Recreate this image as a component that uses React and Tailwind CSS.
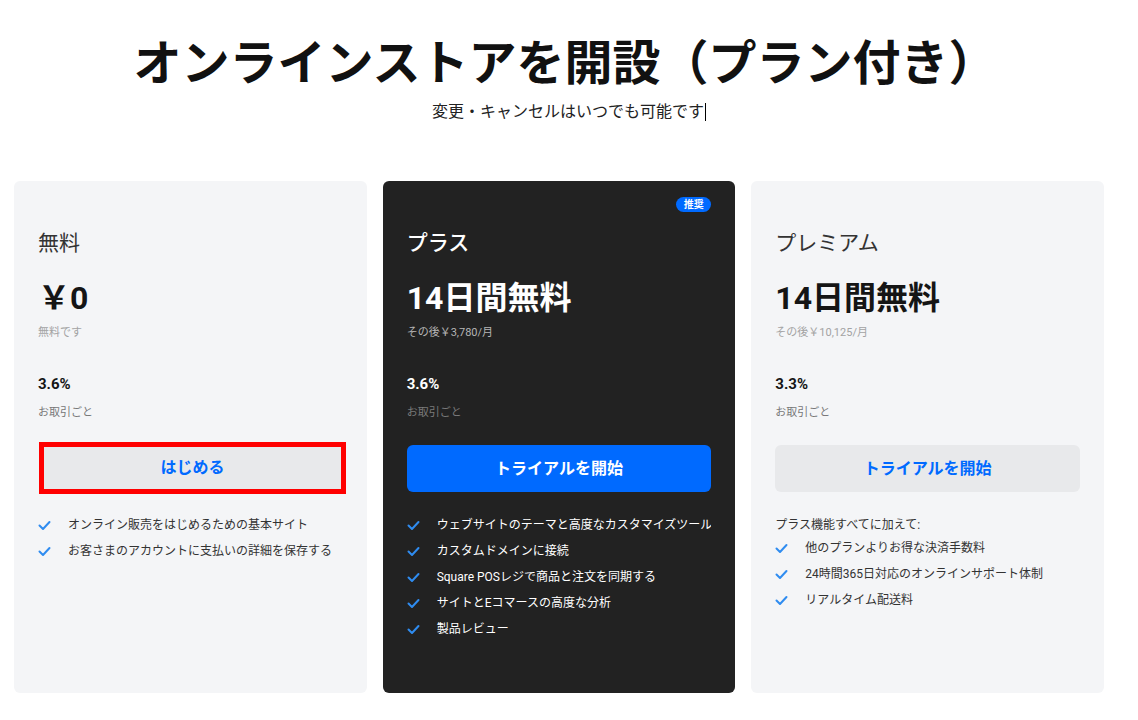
import React from "react";

const FONT = { fontFamily: 'Roboto, "Noto Sans CJK JP", "Noto Sans", sans-serif' };

function Check() {
  return (
    <svg width="13" height="11" viewBox="0 0 13 11" className="shrink-0 block">
      <polyline points="1.5,5.5 5,9 11.5,2" fill="none" stroke="#2f8cf0" strokeWidth="2" strokeLinecap="round" strokeLinejoin="round" />
    </svg>
  );
}

function Feature({ text, dark }) {
  return (
    <li className={`flex items-center h-[26px] overflow-hidden text-[12px] leading-[16px] whitespace-nowrap ${dark ? "text-white" : "text-[#333]"}`}>
      <Check />
      <span className="ml-[17px]">{text}</span>
    </li>
  );
}

function Card({ dark, name, price, sub, rate, cta, ctaPrimary, highlight, header, features, badge }) {
  return (
    <div className={`relative rounded-[6px] h-[512px] px-6 pt-12 flex flex-col ${dark ? "bg-[#222222]" : "bg-[#f4f5f7]"}`}>
      {badge && (
        <span className="absolute top-4 right-6 h-[15px] w-[35px] rounded-full bg-[#006aff] text-white text-[10px] font-bold leading-[15px] text-center">
          {badge}
        </span>
      )}
      <div className="h-[263px] shrink-0 flex flex-col">
        <div className={`mt-px h-[28px] flex items-center text-[21px] ${dark ? "text-white font-medium" : "text-[#333]"}`}>{name}</div>
        <div className={`mt-5 h-[40px] flex items-center text-[32px] font-bold ${dark ? "text-white" : "text-[#151515]"}`}>{price}</div>
        <div className={`mt-[7px] h-[16px] flex items-center text-[11px] ${dark ? "text-[#b5b5b5]" : "text-[#a3a3a3]"}`}>{sub}</div>
        <div className={`mt-[33px] h-[20px] flex items-center text-[15px] font-bold ${dark ? "text-white" : "text-[#151515]"}`}>{rate}</div>
        <div className={`mt-[11px] h-[16px] flex items-center text-[11px] ${dark ? "text-[#7a7a7a]" : "text-[#777]"}`}>お取引ごと</div>
        <div className="mt-auto h-[47px]">
          {highlight ? (
            <div className="ml-px -mt-[3px] w-[307px] h-[52px] border-[5px] border-[#ff0000] bg-[#e8e9eb] flex items-center justify-center text-[16px] font-bold text-[#006aff]">
              {cta}
            </div>
          ) : (
            <div
              className={`h-[47px] rounded-[6px] flex items-center justify-center text-[16px] font-bold ${
                ctaPrimary ? "bg-[#006aff] text-white" : "bg-[#e8e9eb] text-[#006aff]"
              }`}
            >
              {cta}
            </div>
          )}
        </div>
      </div>
      <div className="mt-5 flex flex-col">
        {header && <div className="h-[20px] flex items-center text-[12px] text-[#333] mt-[3px]">{header}</div>}
        <ul className="flex flex-col">
          {features.map((f) => (
            <Feature key={f} text={f} dark={dark} />
          ))}
        </ul>
      </div>
    </div>
  );
}

export default function App() {
  return (
    <div className="w-[1138px] h-[720px] bg-white overflow-hidden" style={FONT}>
      <div className="w-[1118px]">
        <h1 className="pt-[36px] pl-[12px] text-center text-[48px] leading-[56px] font-bold text-[#111]">
          オンラインストアを開設（プラン付き）
        </h1>
        <p className="mt-[8px] pl-[20px] text-center text-[16px] leading-[24px] text-[#222]">
          変更・キャンセルはいつでも可能です
          <span className="inline-block align-middle w-px h-[18px] bg-black ml-px -mt-[2px]" />
        </p>
        <div className="mt-[57px] px-[14px] grid grid-cols-3 gap-4">
          <Card
            name="無料"
            price="￥0"
            sub="無料です"
            rate="3.6%"
            cta="はじめる"
            highlight
            features={["オンライン販売をはじめるための基本サイト", "お客さまのアカウントに支払いの詳細を保存する"]}
          />
          <Card
            dark
            badge="推奨"
            name="プラス"
            price="14日間無料"
            sub="その後￥3,780/月"
            rate="3.6%"
            cta="トライアルを開始"
            ctaPrimary
            features={[
              "ウェブサイトのテーマと高度なカスタマイズツール",
              "カスタムドメインに接続",
              "Square POSレジで商品と注文を同期する",
              "サイトとEコマースの高度な分析",
              "製品レビュー",
            ]}
          />
          <Card
            name="プレミアム"
            price="14日間無料"
            sub="その後￥10,125/月"
            rate="3.3%"
            cta="トライアルを開始"
            header="プラス機能すべてに加えて:"
            features={["他のプランよりお得な決済手数料", "24時間365日対応のオンラインサポート体制", "リアルタイム配送料"]}
          />
        </div>
      </div>
    </div>
  );
}
